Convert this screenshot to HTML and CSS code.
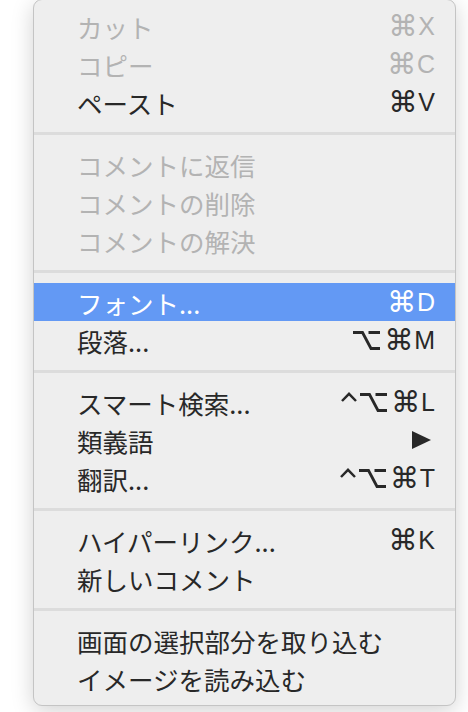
FILE: index.html
```html
<!DOCTYPE html>
<html lang="ja">
<head>
<meta charset="utf-8">
<title>Context menu</title>
<link rel="stylesheet" href="styles.css">
</head>
<body>
<div class="menu">
  <div class="item disabled"><span class="label">カット</span><span class="key"><span class="cmd">⌘</span>X</span></div>
  <div class="item disabled"><span class="label">コピー</span><span class="key"><span class="cmd">⌘</span>C</span></div>
  <div class="item"><span class="label">ペースト</span><span class="key"><span class="cmd">⌘</span>V</span></div>
  <div class="sep"></div>
  <div class="item disabled"><span class="label">コメントに返信</span></div>
  <div class="item disabled"><span class="label">コメントの削除</span></div>
  <div class="item disabled"><span class="label">コメントの解決</span></div>
  <div class="sep"></div>
  <div class="item active"><span class="label">フォント...</span><span class="key"><span class="cmd">⌘</span>D</span></div>
  <div class="item"><span class="label">段落...</span><span class="key"><svg class="opt" width="27" height="19" viewBox="0 0 27 19"><path d="M0 1.5 H9.5 L18 17.5 H27 M15.5 1.5 H27"/></svg><span class="cmd">⌘</span>M</span></div>
  <div class="sep"></div>
  <div class="item"><span class="label">スマート検索...</span><span class="key"><svg class="ctrl" width="16" height="10" viewBox="0 0 16 10"><path d="M1 9 L8 1.8 L15 9"/></svg><svg class="opt" width="27" height="19" viewBox="0 0 27 19"><path d="M0 1.5 H9.5 L18 17.5 H27 M15.5 1.5 H27"/></svg><span class="cmd">⌘</span>L</span></div>
  <div class="item"><span class="label">類義語</span><span class="key"><svg class="arrow" width="19" height="18" viewBox="0 0 19 18"><polygon points="0,0 19,9 0,18"/></svg></span></div>
  <div class="item"><span class="label">翻訳...</span><span class="key"><svg class="ctrl" width="16" height="10" viewBox="0 0 16 10"><path d="M1 9 L8 1.8 L15 9"/></svg><svg class="opt" width="27" height="19" viewBox="0 0 27 19"><path d="M0 1.5 H9.5 L18 17.5 H27 M15.5 1.5 H27"/></svg><span class="cmd">⌘</span>T</span></div>
  <div class="sep"></div>
  <div class="item"><span class="label">ハイパーリンク...</span><span class="key"><span class="cmd">⌘</span>K</span></div>
  <div class="item"><span class="label">新しいコメント</span></div>
  <div class="sep"></div>
  <div class="item"><span class="label">画面の選択部分を取り込む</span></div>
  <div class="item"><span class="label">イメージを読み込む</span></div>
</div>
</body>
</html>
```

FILE: styles.css
```css
html, body {
  margin: 0;
  padding: 0;
  background: #ffffff;
}

body {
  width: 468px;
  height: 712px;
  overflow: hidden;
  font-family: "Liberation Sans", "Noto Sans CJK JP", "DejaVu Sans", sans-serif;
}

.menu {
  box-sizing: border-box;
  width: 423px;
  margin: -1px 0 0 33px;
  padding: 7px 0 8px;
  background: #eeeeee;
  border: 1px solid #c4c4c4;
  border-radius: 9px;
  box-shadow: 0 5px 22px rgba(0, 0, 0, 0.18);
}

.item {
  display: flex;
  align-items: center;
  height: 38px;
  padding: 0 20px 0 43px;
  font-size: 25.5px;
  color: #282828;
}

.item .label {
  font-family: "Noto Sans CJK JP", sans-serif;
  white-space: nowrap;
}

.item .key {
  margin-left: auto;
  font-family: "Liberation Sans", "DejaVu Sans", sans-serif;
  font-size: 25px;
  display: flex;
  align-items: center;
}

.cmd {
  font-family: "DejaVu Sans", sans-serif;
  font-size: 29px;
  line-height: 1;
  margin-right: 1px;
}

.disabled {
  color: #b3b3b3;
}

.active {
  background: #6399f4;
  color: #ffffff;
}

.sep {
  height: 24px;
  display: flex;
  align-items: center;
}

.sep::before {
  content: "";
  display: block;
  width: 100%;
  height: 3px;
  background: #dcdcdc;
}

.arrow {
  display: block;
  fill: currentColor;
  margin-right: 4px;
}

.opt,
.ctrl {
  display: block;
  fill: none;
  stroke: currentColor;
  stroke-width: 2.8;
  stroke-linejoin: miter;
}

.opt {
  margin-right: 4px;
}

.ctrl {
  stroke-width: 2.5;
  margin-right: 3px;
  transform: translateY(-5px);
}
```
